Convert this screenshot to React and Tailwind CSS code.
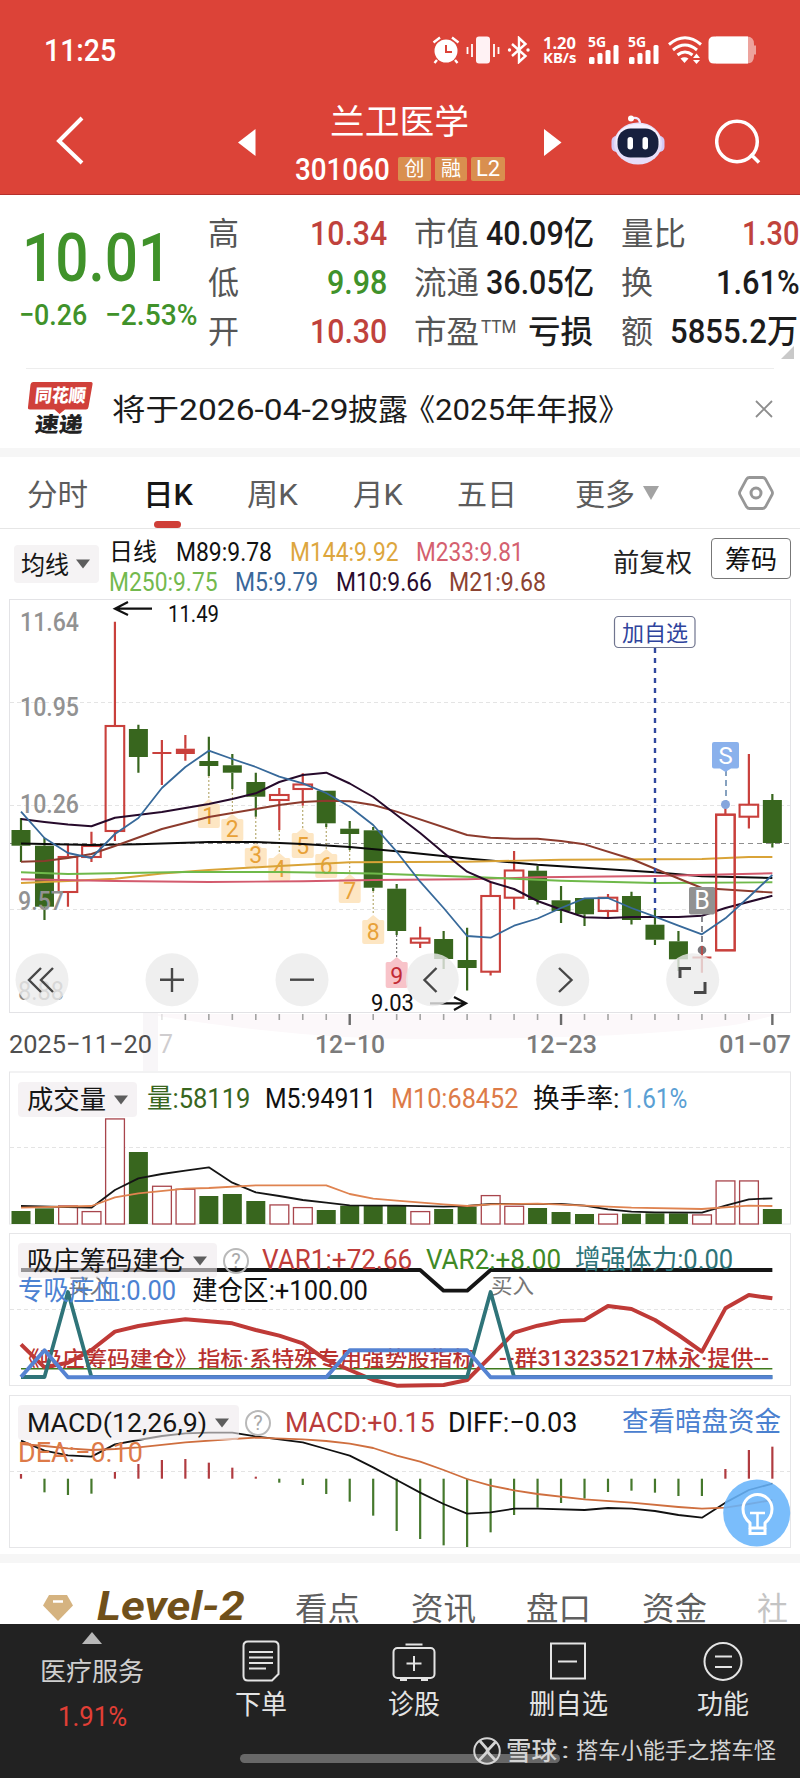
import { useLayoutEffect, useRef, useState } from "react";

const STEP = 23.48;
const cx = (i) => 21 + i * STEP;

/* Text stretched or condensed to the width of its box. */
function Fit({ className = "", children }) {
  const box = useRef(null);
  const inner = useRef(null);
  const [scale, setScale] = useState(1);
  useLayoutEffect(() => {
    const natural = inner.current.offsetWidth;
    if (natural) setScale(box.current.offsetWidth / natural);
  }, [children]);
  return (
    <span ref={box} className={"block shrink-0 overflow-visible whitespace-nowrap leading-none " + className}>
      <span ref={inner} className="inline-block origin-left" style={{ transform: `scaleX(${scale})` }}>
        {children}
      </span>
    </span>
  );
}

function Label({ x, y, w, size, fill, weight = 400, children, opacity }) {
  return (
    <text x={x} y={y} fontSize={size} fill={fill} fontWeight={weight} opacity={opacity} textLength={w} lengthAdjust="spacingAndGlyphs">
      {children}
    </text>
  );
}

function Curve({ pts, color, width = 1.6 }) {
  return (
    <polyline points={pts.map(([i, y]) => `${cx(i)},${y}`).join(" ")} fill="none" stroke={color} strokeWidth={width} strokeLinejoin="round" />
  );
}

const GREEN = "#38661e";
const RED = "#c9403c";

/* [high, body top, body bottom, low, kind] */
const candles = [
  [818, 830, 845.7, 862, "g"], [838, 845.7, 906.7, 920, "g"], [845, 857, 892, 906.7, "h"], [831.7, 846, 857, 862, "h"],
  [621.7, 726, 831, 841, "h"], [724.7, 729, 757, 772.7, "g"], [740, 752, 754, 785, "r"], [735, 748.7, 754, 760.7, "r"],
  [736.7, 761, 766, 776, "g"], [754, 765.3, 772.7, 789, "g"], [772.7, 782, 796.7, 816.7, "g"], [788, 795, 800, 830, "h"],
  [773.3, 784.5, 789, 805.7, "h"], [790.7, 790.7, 823.3, 827, "g"], [821, 828.7, 834, 850, "g"], [827, 830.3, 887.7, 891, "g"],
  [884, 888.7, 931, 935, "g"], [926.7, 938.5, 942.7, 948, "h"], [931, 939, 959, 969, "g"], [927.7, 960, 968, 990.5, "g"],
  [881.7, 896, 971.7, 975.5, "h"], [851, 870.5, 897.7, 909.5, "h"], [866, 870.7, 900, 904.5, "g"], [886, 900.3, 911, 923, "g"],
  [898, 898, 914.3, 926, "g"], [894, 897.7, 911, 918, "h"], [891.7, 896, 920, 924.5, "g"], [910, 924.7, 939.7, 945, "g"],
  [931, 941.3, 959.3, 971, "g"], [950, 956.5, 958.5, 972.7, "r"], [803, 814.7, 950.3, 950.3, "h"], [754, 804.7, 816.7, 828.5, "h"],
  [794, 800, 843, 847.5, "g"],
];

const ma5 = [811.7, 838, 853, 858, 834, 818, 788, 767, 750.7, 759, 767, 776.7, 783.3, 793, 806.7, 825, 851.7, 881.7, 908, 936, 937.7, 925.7, 918.5, 908, 898.3, 898, 908, 916.7, 925.7, 934.3, 918.3, 897, 875].map((y, i) => [i, y]);
const ma10 = [[0, 819], [1, 822], [2, 824.5], [3, 826.3], [4, 817.7], [6, 812], [8, 804], [9, 799], [10, 793.3], [11, 782], [12, 775], [13, 772.7], [14, 783.5], [15, 797], [16, 815], [17, 833], [18, 852.7], [19, 871.7], [20, 882], [21, 889], [22, 901], [23, 909.5], [24, 917.3], [25, 918], [26, 917], [28, 917], [29, 915.7], [30, 908], [32, 895.7]];
const ma21 = [[0, 861.7], [1, 861], [2, 858], [3, 854], [4, 846], [6, 829], [8, 817], [10, 809], [11, 805], [12, 802], [13, 800.7], [14, 801.3], [15, 805], [16, 811.7], [19, 835], [20, 837.7], [21, 838.7], [22, 838.7], [23, 841], [24, 844.3], [26, 859], [28, 878.5], [29, 888], [30, 889.5], [32, 892.5]];
const ma89 = [[0, 843.5], [3, 845], [5, 844.3], [8, 842], [10, 842], [12, 844], [14, 847], [16, 851.3], [19, 858.5], [22, 864.7], [27, 872.3], [29, 876.3], [32, 878]];
const ma144 = [[0, 883], [2, 881], [4, 878.7], [6, 873.5], [8, 870], [11, 866], [14, 862.3], [19, 861.7], [23, 859.7], [29, 859], [31, 857], [32, 857]];
const ma233 = [[0, 879.3], [4, 881], [8, 882], [12, 881.3], [15, 880], [19, 879.3], [22, 877.3], [27, 876], [32, 873.3]];
const ma250 = [[0, 872.3], [2, 874], [7, 872], [11, 872], [15, 873.5], [19, 876.7], [23, 880.7], [27, 883], [32, 882.3]];

/* [index, digit, peak y, box bottom y, from y] */
const tags = [
  [8, "1", 799, 828, 776], [9, "2", 814, 841, 789], [10, "3", 843, 867, 817], [11, "4", 853, 881, 830], [12, "5", 828, 858, 806],
  [13, "6", 849, 878, 827], [14, "7", 874, 903, 850], [15, "8", 915, 944, 891],
];

function Tag({ i, n, top, bottom, from, fill, color }) {
  const x = cx(i);
  return (
    <g>
      <path d={`M${x} ${from}V${top}`} stroke={color === "#c22a35" ? "#555" : "#a99a55"} strokeWidth="1" strokeDasharray="2 2" />
      <path d={`M${x - 9.5} ${top + 5}h3.5l6-5 6 5h3.5q1.500 0 1.500 1.500V${bottom - 2}q0 2-2 2h-18q-2 0-2-2V${top + 6.5}q0-1.500 1.500-1.500z`} fill={fill} opacity="0.85" />
      <text x={x} y={bottom - 4} fontSize="23" textAnchor="middle" fill={color}>{n}</text>
    </g>
  );
}

function PriceChart() {
  const controls = [42, 172, 302, 432.3, 562.7, 692.7];
  return (
    <svg viewBox="0 599 800 472" className="block h-[472px] w-[800px]" fontFamily="Roboto, 'Noto Sans CJK SC', sans-serif">
      <rect x="143" y="1013" width="15" height="58" fill="#f8f6f8" />
      <path d="M158 1014H780L740 1024Q640 1039 420 1039Q300 1039 158 1016z" fill="#fcf8fa" />
      <rect x="9.5" y="599.5" width="781" height="413" fill="none" stroke="#e3e3e6" />
      {[702.5, 805.5, 909.5].map((y) => <path key={y} d={`M10 ${y}H790`} stroke="#e4e4e4" strokeDasharray="4 3" />)}
      <path d="M10 843.5H790" stroke="#8f8f8f" strokeDasharray="5 4" strokeWidth="1.2" />
      <Label x="18" y="1000" w="46" size="26" fill="#8a8a8a">8.88</Label>
      {candles.map(([hi, top, bot, lo, kind], i) => {
        const x = cx(i);
        const c = kind === "g" ? GREEN : RED;
        return (
          <g key={i}>
            <path d={`M${x} ${hi}V${top}M${x} ${bot}V${lo}`} stroke={c} strokeWidth="2.2" />
            {kind === "h"
              ? <rect x={x - 9.3} y={top} width="18.6" height={bot - top} fill="none" stroke={c} strokeWidth="2.1" />
              : <rect x={x - 9.5} y={top} width="19" height={bot - top} fill={c} />}
          </g>
        );
      })}
      <Label x="20" y="631" w="59" size="26" fill="#929292" weight={500}>11.64</Label>
      <Label x="20" y="715.5" w="59" size="26" fill="#929292" weight={500}>10.95</Label>
      <Label x="20" y="813" w="59" size="26" fill="#929292" weight={500}>10.26</Label>
      <Label x="18" y="910" w="46" size="26" fill="#929292" weight={500}>9.57</Label>
      {tags.map(([i, n, top, bottom, from]) => <Tag key={i} i={i} n={n} top={top} bottom={bottom} from={from} fill="#fde2b8" color="#e8a138" />)}
      <Tag i={16} n="9" top={957} bottom={988} from={935} fill="#f7b9bf" color="#c22a35" />
      <Curve pts={ma89} color="#0b0b0b" width={2} />
      <Curve pts={ma144} color="#d9a337" width={1.9} />
      <Curve pts={ma233} color="#d35a6d" width={1.9} />
      <Curve pts={ma250} color="#6fb94a" width={1.9} />
      <Curve pts={ma21} color="#8c3b2d" width={1.9} />
      <Curve pts={ma10} color="#260a2b" width={2} />
      <path d="M655 648V910" stroke="#2f479e" strokeWidth="2.4" strokeDasharray="5 5" />
      <rect x="614.5" y="616.5" width="80.5" height="31" rx="4" fill="#fff" stroke="#70758f" strokeWidth="1.2" />
      <Label x="622" y="640.5" w="66" size="22" fill="#2f449c">加自选</Label>
      <path d="M726 770V803" stroke="#5f83ab" strokeWidth="1.5" strokeDasharray="6 4" />
      <circle cx="725.5" cy="804.5" r="4.5" fill="#86a6dd" />
      <path d="M714 742h23q2 0 2 2v22.500q0 2-2 2h-6l-5.500 3.500-5.500-3.500h-6q-2 0-2-2v-22.500q0-2 2-2z" fill="#8ab1ec" />
      <text x="725.500" y="763.5" fontSize="24" textAnchor="middle" fill="#fff">S</text>
      <rect x="689" y="887" width="26" height="27.500" rx="2" fill="#919191" />
      <text x="702" y="909" fontSize="25" textAnchor="middle" fill="#fff">B</text>
      <path d="M702 916V946" stroke="#6a6a72" strokeWidth="1.6" strokeDasharray="6 4" />
      <circle cx="702" cy="950" r="4.300" fill="#77777c" />
      <path d="M702 946V957" stroke={RED} strokeWidth="1.500" />
      <rect x={cx(30) - 9.3} y="814.7" width="18.6" height="135.6" fill="none" stroke={RED} strokeWidth="2.1" />
      <Curve pts={ma5} color="#37699a" width={1.8} />
      <path d="M152 608.7H115M128 602L115 608.7L128 615" fill="none" stroke="#111" strokeWidth="2.2" />
      <Label x="168" y="622" w="51" size="23" fill="#111">11.49</Label>
      <path d="M430 1003.3H466M454 997L466 1003.3L454 1010" fill="none" stroke="#111" strokeWidth="2.2" />
      <Label x="371" y="1011" w="43" size="23.5" fill="#111">9.03</Label>
      {controls.map((x) => <circle key={x} cx={x} cy="979.7" r="26.5" fill="#ebebeb" opacity="0.8" />)}
      <g fill="none" stroke="#474747" strokeWidth="2.4">
        <path d="M41 968L29 980L41 992M53 968L41 980L53 992" />
        <path d="M160 979.7H184M172 968V992" />
        <path d="M290 979.7H314" />
        <path d="M436.500 968L424.500 980L436.500 992" />
        <path d="M559 968L571.500 980L559 992" />
        <path d="M680 978V968.500H691M694 992.500H705V982" strokeWidth="3" />
      </g>
      {Array.from({ length: 27 }, (_, k) => k + 6).map((i) => {
        const major = i === 14 || i === 23 || i === 32;
        return <path key={i} d={`M${cx(i)} 1014V${major ? 1025 : 1020}`} stroke={major ? "#6c6c6c" : "#a3a3a3"} strokeWidth={major ? 2.4 : 1.6} opacity={i === 6 ? 0.3 : 1} />;
      })}
      <Label x="159" y="1053" w="14" size="26" fill="#cfcdcf">7</Label>
      <Label x="9" y="1053" w="143" size="26.500" fill="#4f4f4f">2025−11−20</Label>
      <Label x="315" y="1053" w="70" size="26.500" fill="#7b7b7b" weight={500}>12−10</Label>
      <Label x="526" y="1053" w="71" size="26.500" fill="#7b7b7b" weight={500}>12−23</Label>
      <Label x="719" y="1053" w="72" size="26.500" fill="#7b7b7b" weight={500}>01−07</Label>
    </svg>
  );
}

const vz = (pts) => pts.map(([i, z]) => [i, 1060 + z / 3]);
const mz = (pts) => pts.map(([i, z]) => [i, 1390 + z / 3]);

const volumes = [[453, 1], [445, 1], [436, 0], [453, 0], [175, 0], [276, 1], [377, 0], [386, 0], [408, 1], [402, 1], [423, 1], [433, 0], [441, 0], [450, 1], [437, 1], [435, 1], [438, 1], [453, 0], [447, 1], [440, 1], [405, 0], [437, 0], [444, 1], [456, 1], [462, 1], [461, 0], [461, 1], [460, 1], [460, 1], [463, 0], [361, 0], [361, 0], [447, 1]];
const vol5 = vz([[0, 438], [3, 443], [4, 390], [5, 355], [6, 342], [7, 332], [8, 322], [9, 368], [10, 397], [11, 408], [12, 420], [13, 428], [14, 436], [16, 437], [18, 440], [19, 438], [20, 432], [23, 432], [24, 437], [25, 448], [26, 455], [27, 457], [29, 458], [30, 437], [31, 418], [32, 415]]);
const vol10 = vz([[0, 443], [3, 438], [4, 412], [5, 400], [7, 386], [8, 384], [10, 376], [13, 376], [14, 402], [15, 416], [16, 422], [18, 433], [19, 438], [20, 433], [22, 431], [24, 437], [26, 443], [29, 447], [31, 437], [32, 438]]);

function VolumeChart() {
  return (
    <svg viewBox="0 1071 800 162" className="block h-[162px] w-[800px]">
      <rect x="9.5" y="1072" width="781" height="152" fill="none" stroke="#e6e6e8" />
      <path d="M10 1147.500H790" stroke="#e4e4e4" strokeDasharray="4 3" />
      {volumes.map(([z, solid], i) => {
        const y = 1060 + z / 3;
        return solid
          ? <rect key={i} x={cx(i) - 9.5} y={y} width="19" height={1224 - y} fill={GREEN} />
          : <rect key={i} x={cx(i) - 9.3} y={y + 0.6} width="18.8" height={1223.4 - y} fill="#fff" stroke="#a8454c" strokeWidth="1.3" />;
      })}
      <Curve pts={vol5} color="#151515" width={1.8} />
      <Curve pts={vol10} color="#df8350" width={1.8} />
    </svg>
  );
}

const redLine = vz([[0, 853], [1, 922], [2, 908], [3, 870], [4, 815], [5, 798], [6, 787], [7, 778], [8, 784], [9, 790], [10, 810], [11, 827], [12, 850], [13, 900], [14, 930], [15, 960], [16, 977], [18, 975], [19, 960], [20, 890], [21, 818], [22, 797], [23, 783], [24, 780], [25, 738], [26, 747], [27, 780], [28, 825], [29, 875], [30, 745], [31, 705], [32, 715]]);

function AccumulationChart() {
  return (
    <svg viewBox="0 1233 800 162" className="block h-[162px] w-[800px]" fontFamily="Roboto, 'Noto Sans CJK SC', sans-serif">
      <rect x="9.5" y="1233.5" width="781" height="152" fill="none" stroke="#e6e6e8" />
      <path d="M10 1309.5H790" stroke="#e4e4e4" strokeDasharray="4 3" />
      <Label x="68" y="1293" w="43" size="21" fill="#777">买入</Label>
      <Label x="491" y="1293" w="43" size="21" fill="#777">买入</Label>
      <Label x="17" y="1366" w="458" size="21" fill="#b8322f" weight={500}>《吸庄筹码建仓》指标·系特殊专用强势股指标</Label>
      <Label x="499" y="1366" w="270" size="21.500" fill="#b8322f" weight={500}>--群313235217林永·提供--</Label>
      <Curve pts={[[0, 1368.7], [32, 1368.7]]} color="#3f7a1d" width={1.5} />
      <Curve pts={[[0, 1270], [17, 1270], [18, 1290.7], [19, 1290.7], [20, 1270], [32, 1270]]} color="#151515" width={3.8} />
      <Curve pts={redLine} color="#bf3a37" width={4} />
      <Curve pts={[[0, 1377], [1, 1377], [2, 1292], [3, 1377], [19, 1377], [20, 1292], [21, 1377], [32, 1377]]} color="#2f7479" width={3.8} />
      <Curve pts={[[0, 1377], [1, 1350.3], [2, 1377.3], [13, 1377.3], [14, 1350.3], [19, 1350.3], [20, 1377.3], [32, 1377.3]]} color="#5583d2" width={4} />
    </svg>
  );
}

const macdBars = [252, 307, 315, 311, 246, 222, 210, 207, 218, 233, 260, 278, 285, 312, 335, 377, 423, 447, 466, 471, 427, 375, 353, 339, 326, 306, 302, 308, 318, 318, 237, 180, 170];
const diff = mz([[0, 152], [1, 182], [2, 196], [3, 200], [4, 163], [5, 150], [6, 138], [7, 130], [8, 128], [9, 128], [10, 139], [11, 148], [12, 157], [13, 177], [14, 197], [15, 232], [16, 270], [17, 308], [18, 342], [19, 371], [20, 367], [21, 356], [22, 356], [24, 360], [25, 354], [26, 356], [27, 363], [28, 375], [29, 383], [30, 338], [31, 300], [32, 281]]);
const dea = mz([[0, 162], [1, 168], [2, 175], [3, 180], [4, 177], [5, 172], [7, 157], [9, 147], [10, 143], [12, 148], [13, 153], [14, 161], [15, 174], [16, 197], [17, 215], [18, 240], [19, 267], [20, 287], [21, 301], [22, 312], [24, 328], [26, 338], [28, 351], [29, 356], [30, 353], [31, 342], [32, 330]]);

function MacdChart() {
  return (
    <svg viewBox="0 1395 800 159" className="block h-[159px] w-[800px]">
      <rect x="9.5" y="1395.5" width="781" height="152" fill="none" stroke="#e6e6e8" />
      <path d="M10 1471.500H790" stroke="#e4e4e4" strokeDasharray="4 3" />
      {macdBars.map((z, i) => {
        const y = 1390 + z / 3;
        return <path key={i} d={`M${cx(i)} 1478.700V${y}`} stroke={z < 266 ? "#b03b40" : "#45782c"} strokeWidth="2.2" />;
      })}
      <Curve pts={diff} color="#111" width={1.8} />
      <Curve pts={dea} color="#cf6f3f" width={1.8} />
      <circle cx="756.700" cy="1513" r="33.500" fill="#68b4fb" opacity="0.88" />
      <g fill="none" stroke="#fff" strokeWidth="3">
        <path d="M750 1528V1523Q743 1517 743 1509A14.500 14.500 0 0 1 772 1509Q772 1517 765 1523V1528Z" strokeLinejoin="round" />
        <path d="M750 1528V1533.500H765V1528" />
        <path d="M750 1513H765M757.500 1513V1527" strokeWidth="2.500" />
      </g>
    </svg>
  );
}

function Caret({ className = "" }) {
  return (
    <svg viewBox="0 0 14 10" className={"h-[10px] w-[14px] shrink-0 " + className}>
      <path d="M0 .5H14L7 9.500z" fill="currentColor" />
    </svg>
  );
}

function Picker({ className, width, children }) {
  return (
    <div className={"flex h-[35px] shrink-0 items-center rounded-[4px] bg-[#eeeaec]/60 pl-[9px] text-[26px] text-[#161616] " + className}>
      <Fit className={width}>{children}</Fit>
      <Caret className="ml-[8px] text-[#5d5d5d]" />
    </div>
  );
}

function Help({ className = "" }) {
  return (
    <span className={"flex size-[26px] shrink-0 items-center justify-center rounded-full border-2 border-[#b9b9b9] text-[20px] leading-none text-[#a9a9a9] " + className}>
      ?
    </span>
  );
}

function Signal() {
  return (
    <div className="relative h-[28px] w-[33px]">
      <Fit className="absolute left-[1px] -top-[1px] w-[18px] font-[Noto_Sans] text-[14px] font-bold">5G</Fit>
      <svg viewBox="0 0 33 28" className="h-[28px] w-[33px]" fill="#fff">
        <rect x="2" y="21" width="5.500" height="7" rx="1.500" />
        <rect x="10.500" y="17" width="5" height="11" rx="1.500" />
        <rect x="18.500" y="14" width="5" height="14" rx="1.500" />
        <rect x="26.500" y="9" width="5" height="19" rx="1.500" />
      </svg>
    </div>
  );
}

function StatusBar() {
  return (
    <div className="flex h-[100px] items-center">
      <Fit className="ml-[44px] w-[72px] text-[32px] font-medium">11:25</Fit>
      <div className="ml-[316px] flex items-center">
        <svg viewBox="0 0 28 28" className="h-[28px] w-[28px]">
          <circle cx="14" cy="15" r="11.500" fill="#fff" />
          <path d="M1.500 6.500L8 1.500M26.500 6.500L20 1.500M5 24L2.500 27M23 24L25.500 27" stroke="#fff" strokeWidth="2.400" fill="none" />
          <path d="M14 9V16H20" stroke="#dc4338" strokeWidth="2" fill="none" />
        </svg>
        <svg viewBox="0 0 34 28" className="ml-[6px] h-[28px] w-[34px]">
          <rect x="10" y="0.500" width="14" height="27" rx="3" fill="#fff2f4" />
          <path d="M1.500 11V18M6 8V21M28 8V21M32.500 11V18" stroke="#fff" strokeWidth="1.800" />
        </svg>
        <svg viewBox="0 0 24 28" className="ml-[7px] h-[28px] w-[24px]">
          <path d="M5 8L18.500 20L12 26V2L18.500 8L5 20" fill="none" stroke="#fff" strokeWidth="2.400" />
          <circle cx="2.500" cy="14" r="1.700" fill="#fff" />
          <circle cx="21" cy="14" r="1.700" fill="#fff" />
        </svg>
        <div className="ml-[12px] flex flex-col font-[Noto_Sans] font-bold">
          <Fit className="w-[33px] text-[16.5px]">1.20</Fit>
          <Fit className="w-[33px] text-[14px]">KB/s</Fit>
        </div>
        <div className="ml-[11px]"><Signal /></div>
        <div className="ml-[7px]"><Signal /></div>
        <svg viewBox="0 0 34 28" className="ml-[8px] h-[28px] w-[34px]" fill="none" stroke="#fff" strokeWidth="3">
          <path d="M1 8.500Q17 -5 33 8.500M5 14Q17 4 29 14M9.500 19Q17 13 24.500 19" />
          <path d="M12.500 22.500Q16.500 20 20.500 22.500L16.500 27z" fill="#fff" stroke="none" />
          <path d="M25 22L28.500 17.500L32 22zM25 24L28.500 28L32 24z" fill="#fff" stroke="none" />
        </svg>
        <svg viewBox="0 0 49 28" className="ml-[6px] h-[28px] w-[49px]">
          <path d="M8 0.500H39Q46 .5 46 8V9.500H48V18.500H46V20Q46 27.500 39 27.500H8Z" fill="#eda39d" />
          <path d="M6 0.500H40V27.500H6Q.5 27.500 .5 22V6Q.5 .5 6 .5z" fill="#fff" />
        </svg>
      </div>
    </div>
  );
}

function TitleBar() {
  return (
    <div className="flex h-[94px] items-start">
      <svg viewBox="0 0 30 50" className="ml-[55px] mt-[15px] h-[50px] w-[30px]">
        <path d="M27 3L4 26L27 48" fill="none" stroke="#fff" strokeWidth="4" />
      </svg>
      <svg viewBox="0 0 18 27" className="ml-[153px] mt-[29px] h-[27px] w-[18px]"><path d="M0 13.500L17.500 0V27z" fill="#fff" /></svg>
      <div className="ml-[39px] flex w-[212px] flex-col">
        <Fit className="ml-[35px] mt-[5px] h-[36px] w-[139px] text-[34px]">兰卫医学</Fit>
        <div className="mt-[14px] flex h-[28px] items-center">
          <Fit className="w-[95px] text-[31px] font-medium">301060</Fit>
          <span className="ml-[8px] flex h-[24px] w-[33px] items-center justify-center rounded-[2px] bg-[#d98f4f] text-[20px] leading-none">创</span>
          <span className="ml-[4px] flex h-[24px] w-[32px] items-center justify-center rounded-[2px] bg-[#d98f4f] text-[20px] leading-none">融</span>
          <span className="ml-[4px] flex h-[24px] w-[34px] items-center justify-center rounded-[2px] bg-[#d98f4f] text-[22px] leading-none">L2</span>
        </div>
      </div>
      <svg viewBox="0 0 18 27" className="ml-[37px] mt-[29px] h-[27px] w-[18px]"><path d="M17.500 13.500L0 0V27z" fill="#fff" /></svg>
      <svg viewBox="0 0 54 50" className="ml-[49px] mt-[15px] h-[50px] w-[54px]">
        <path d="M20 3.500Q29 1 29 9" fill="none" stroke="#efe9ff" strokeWidth="2.200" />
        <circle cx="20" cy="3.500" r="3" fill="#fff" />
        <rect x="0.500" y="21" width="10" height="16" rx="5" fill="#d4caf5" />
        <rect x="43.500" y="21" width="10" height="16" rx="5" fill="#d4caf5" />
        <ellipse cx="27" cy="28.500" rx="24" ry="21" fill="#e6def9" />
        <ellipse cx="27" cy="26" rx="22" ry="17" fill="#f7f3ff" />
        <rect x="6.500" y="13.500" width="41" height="29" rx="13" fill="#17203e" />
        <rect x="16.500" y="22" width="5.500" height="12.500" rx="2.700" fill="#fff" />
        <rect x="31.500" y="22" width="5.500" height="12.500" rx="2.700" fill="#fff" />
      </svg>
      <svg viewBox="0 0 46 46" className="ml-[50px] mt-[19px] h-[46px] w-[46px]">
        <circle cx="22" cy="22.500" r="20.300" fill="none" stroke="#fff" strokeWidth="3.500" />
        <path d="M35.500 35L44 43.500" stroke="#fff" strokeWidth="3.500" />
      </svg>
    </div>
  );
}

function Quote() {
  const row = "flex h-[49px] items-center";
  return (
    <section className="flex h-[173px] pt-[14px]">
      <div className="w-[208px] shrink-0 text-[#40922a]">
        <Fit className="ml-[22px] mt-[17px] w-[149px] text-[66px] font-medium">10.01</Fit>
        <div className="mt-[8px] flex font-medium">
          <Fit className="ml-[19px] w-[68px] text-[30px]">−0.26</Fit>
          <Fit className="ml-[18px] w-[92px] text-[30px]">−2.53%</Fit>
        </div>
      </div>
      <div className="w-[206px] shrink-0 text-[32px] text-[#555]">
        <div className={row}><Fit className="w-[31px]">高</Fit><Fit className="ml-[71px] w-[77px] text-[33px] font-medium text-[#c0423c]">10.34</Fit></div>
        <div className={row}><Fit className="w-[31px]">低</Fit><Fit className="ml-[88px] w-[60px] text-[33px] font-medium text-[#40922a]">9.98</Fit></div>
        <div className={row}><Fit className="w-[31px]">开</Fit><Fit className="ml-[71px] w-[77px] text-[33px] font-medium text-[#c0423c]">10.30</Fit></div>
      </div>
      <div className="w-[207px] shrink-0 text-[32px] text-[#555]">
        <div className={row}><Fit className="w-[65px]">市值</Fit><Fit className="ml-[7px] w-[108px] text-[33px] font-medium text-[#1c1c1c]">40.09亿</Fit></div>
        <div className={row}><Fit className="w-[65px]">流通</Fit><Fit className="ml-[7px] w-[108px] text-[33px] font-medium text-[#1c1c1c]">36.05亿</Fit></div>
        <div className={row}>
          <Fit className="w-[65px]">市盈</Fit>
          <Fit className="ml-[2px] w-[35px] -translate-y-[5px] text-[18px]">TTM</Fit>
          <Fit className="ml-[12px] w-[65px] font-medium text-[#1c1c1c]">亏损</Fit>
        </div>
      </div>
      <div className="relative w-[179px] shrink-0 text-[32px] text-[#555]">
        <div className={row}><Fit className="w-[65px]">量比</Fit><Fit className="ml-[56px] w-[57px] text-[33px] font-medium text-[#c0423c]">1.30</Fit></div>
        <div className={row}><Fit className="w-[32px]">换</Fit><Fit className="ml-[63px] w-[84px] text-[33px] font-medium text-[#1c1c1c]">1.61%</Fit></div>
        <div className={row}><Fit className="w-[32px]">额</Fit><Fit className="ml-[17px] w-[128px] text-[33px] font-medium text-[#1c1c1c]">5855.2万</Fit></div>
        <svg viewBox="0 0 13 13" className="absolute left-[160px] top-[137px] size-[13px]"><path d="M13 0V13H0z" fill="#c9c9c9" /></svg>
      </div>
    </section>
  );
}

function Notice() {
  return (
    <section className="mx-[26px] flex h-[80px] items-start border-t border-[#ededed]">
      <div className="relative ml-[1px] mt-[13px] h-[56px] w-[68px] shrink-0 font-black">
        <svg viewBox="0 0 68 56" className="absolute inset-0 h-[56px] w-[68px]">
          <path d="M6 0H64Q66 0 65.500 2.500L61.500 25Q61 27.500 59 27.500H38L32.500 32L27.500 27.500H3Q.5 27.500 1 25L3.500 2.500Q4 0 6 0z" fill="#d0403a" />
        </svg>
        <Fit className="absolute left-[8px] top-[5px] w-[51px] -skew-x-6 text-[18px] font-black text-white">同花顺</Fit>
        <Fit className="absolute left-[8px] top-[33px] w-[48px] -skew-x-6 text-[21px] font-black text-[#222]">速递</Fit>
      </div>
      <Fit className="ml-[17px] mt-[26px] w-[236px] text-[30px] text-[#1b1b1b]">将于2026-04-29</Fit>
      <Fit className="mt-[26px] w-[60px] text-[30px] text-[#1b1b1b]">披露</Fit>
      <Fit className="-ml-[4px] mt-[26px] w-[225px] text-[30px] text-[#1b1b1b]">《2025年年报》</Fit>
      <svg viewBox="0 0 18 18" className="ml-[126px] mt-[31px] size-[18px] shrink-0"><path d="M1 1L17 17M17 1L1 17" stroke="#8d8d8d" strokeWidth="1.800" /></svg>
    </section>
  );
}

function Periods() {
  return (
    <section className="relative flex h-[72px] items-center border-b border-[#e6e6e6] text-[30px] text-[#5c5c5c]">
      <Fit className="ml-[27px] mt-[4px] w-[61px]">分时</Fit>
      <Fit className="ml-[55px] mt-[4px] w-[50px] font-medium text-[#161616]">日K</Fit>
      <Fit className="ml-[54px] mt-[4px] w-[51px]">周K</Fit>
      <Fit className="ml-[55px] mt-[4px] w-[50px]">月K</Fit>
      <Fit className="ml-[54px] mt-[4px] w-[60px]">五日</Fit>
      <Fit className="ml-[58px] mt-[4px] w-[60px]">更多</Fit>
      <svg viewBox="0 0 16 14" className="ml-[8px] h-[14px] w-[16px]"><path d="M0 0H16L8 14z" fill="#a3a3a3" /></svg>
      <svg viewBox="0 0 36 34" className="ml-[79px] h-[34px] w-[36px]" fill="none" stroke="#979797" strokeWidth="2.800">
        <path d="M11.500 1.500H24.500Q26.500 1.500 27.500 3.200L34 15.200Q35 17 34 18.800L27.500 30.800Q26.500 32.500 24.500 32.500H11.500Q9.500 32.500 8.500 30.800L2 18.800Q1 17 2 15.200L8.500 3.200Q9.500 1.500 11.500 1.500z" />
        <circle cx="18" cy="17" r="5" strokeWidth="3" />
      </svg>
      <span className="absolute bottom-0 left-[154px] h-[7px] w-[27px] rounded-full bg-[#cf3f38]" />
    </section>
  );
}

function AverageLegend() {
  return (
    <section className="flex h-[70px] text-[26px]">
      <div className="ml-[14px] mt-[16px] flex h-[38px] w-[85px] shrink-0 items-center rounded-[4px] bg-[#f5f3f4] pl-[7px] text-[25px] text-[#161616]">
        <Fit className="mt-[2px] w-[48px]">均线</Fit>
        <Caret className="ml-[7px] text-[#5d5d5d]" />
      </div>
      <div className="ml-[10px] mt-[7px] w-[500px] shrink-0">
        <div className="flex h-[31px] items-center">
          <Fit className="w-[48px] text-[24px] text-[#111]">日线</Fit>
          <Fit className="ml-[19px] w-[96px] text-[#111]">M89:9.78</Fit>
          <Fit className="ml-[18px] w-[109px] text-[#dda63d]">M144:9.92</Fit>
          <Fit className="ml-[17px] w-[108px] text-[#d4606f]">M233:9.81</Fit>
        </div>
        <div className="flex h-[30px] items-center">
          <Fit className="w-[109px] text-[#73b94e]">M250:9.75</Fit>
          <Fit className="ml-[17px] w-[83px] text-[#3a689a]">M5:9.79</Fit>
          <Fit className="ml-[18px] w-[96px] text-[#2a0c2d]">M10:9.66</Fit>
          <Fit className="ml-[17px] w-[97px] text-[#8c4332]">M21:9.68</Fit>
        </div>
      </div>
      <Fit className="ml-[4px] mt-[21px] w-[79px] text-[26px] text-[#222]">前复权</Fit>
      <div className="ml-[19px] mt-[9px] flex h-[41px] w-[80px] items-center rounded-[4px] border border-[#777] pl-[13px] text-[26px] text-[#111]">
        <Fit className="mt-[2px] w-[52px]">筹码</Fit>
      </div>
    </section>
  );
}

function VolumePanel() {
  return (
    <section className="relative">
      <VolumeChart />
      <div className="absolute left-[18px] top-[11px] flex items-center text-[27px]">
        <Picker className="w-[119px]" width="w-[79px]">成交量</Picker>
        <Fit className="ml-[10px] w-[103px] text-[#38661e]">量:58119</Fit>
        <Fit className="ml-[15px] w-[111px] text-[#111]">M5:94911</Fit>
        <Fit className="ml-[15px] w-[127px] text-[#dd7b48]">M10:68452</Fit>
        <Fit className="ml-[15px] w-[87px] text-[#111]">换手率:</Fit>
        <Fit className="ml-[2px] w-[65px] text-[#5a9fd4]">1.61%</Fit>
      </div>
    </section>
  );
}

function AccumulationPanel() {
  return (
    <section className="relative">
      <AccumulationChart />
      <div className="absolute left-[18px] top-[10px] flex items-center text-[27px]">
        <Picker className="w-[199px]" width="w-[158px]">吸庄筹码建仓</Picker>
        <Help className="ml-[6px]" />
        <Fit className="ml-[13px] w-[150px] text-[#bf3d3a]">VAR1:+72.66</Fit>
        <Fit className="ml-[14px] w-[135px] text-[#3f8a26]">VAR2:+8.00</Fit>
        <Fit className="ml-[14px] w-[158px] text-[#2f7479]">增强体力:0.00</Fit>
      </div>
      <div className="absolute left-[18px] top-[45px] flex text-[27px]">
        <Fit className="w-[158px] text-[#4c82d2]">专吸庄血:0.00</Fit>
        <Fit className="ml-[16px] w-[176px] text-[#111]">建仓区:+100.00</Fit>
      </div>
    </section>
  );
}

function MacdPanel() {
  return (
    <section className="relative">
      <MacdChart />
      <div className="absolute left-[18px] top-[10px] flex items-center text-[28px]">
        <Picker className="w-[221px]" width="w-[180px]">MACD(12,26,9)</Picker>
        <Help className="ml-[6px]" />
        <Fit className="ml-[14px] w-[150px] text-[#b93c3b]">MACD:+0.15</Fit>
        <Fit className="ml-[13px] w-[129px] text-[#111]">DIFF:−0.03</Fit>
        <Fit className="ml-[45px] w-[159px] text-[27px] text-[#4a80cf]">查看暗盘资金</Fit>
      </div>
      <Fit className="absolute left-[18px] top-[44px] w-[125px] text-[28px] text-[#dd7a48]">DEA:−0.10</Fit>
    </section>
  );
}

function InfoTabs() {
  return (
    <section className="flex h-[61px] items-start overflow-hidden pt-[29px] text-[32px] text-[#5f5f5f]">
      <svg viewBox="0 0 30 26" className="ml-[43px] mt-[3px] h-[26px] w-[30px]">
        <path d="M6 0H24L30 10.500L15 26L0 10.500z" fill="#d5b380" />
        <path d="M10 6.500H20" stroke="#fff" strokeWidth="2.500" />
      </svg>
      <Fit className="-mt-[5px] ml-[24px] w-[148px] text-[40px] font-bold italic text-[#70501a]">Level-2</Fit>
      <Fit className="ml-[50px] mt-[1px] w-[65px]">看点</Fit>
      <Fit className="ml-[51px] mt-[1px] w-[65px]">资讯</Fit>
      <Fit className="ml-[50px] mt-[1px] w-[65px]">盘口</Fit>
      <Fit className="ml-[51px] mt-[1px] w-[65px]">资金</Fit>
      <Fit className="ml-[50px] mt-[1px] w-[31px] text-[#c4c4c4]">社</Fit>
    </section>
  );
}

function BottomBar() {
  return (
    <footer className="relative flex h-[154px] bg-[#222] text-[27px] text-[#e4e4e4]">
      <div className="flex w-[184px] shrink-0 flex-col items-center">
        <svg viewBox="0 0 20 12" className="mt-[8px] h-[12px] w-[20px]"><path d="M10 0L20 12H0z" fill="#b8b8b8" /></svg>
        <Fit className="mt-[15px] w-[104px] text-[26px] text-[#cfcfcf]">医疗服务</Fit>
        <Fit className="mt-[18px] w-[69px] text-[28px] text-[#e23f36]">1.91%</Fit>
      </div>
      <div className="flex w-[153px] shrink-0 flex-col items-center">
        <svg viewBox="0 0 38 42" className="mt-[16px] h-[42px] w-[38px]" fill="none" stroke="#e4e4e4" strokeWidth="2">
          <path d="M6 1.500H32Q36.500 1.500 36.500 6V34L30 40.500H6Q1.500 40.500 1.500 36V6Q1.500 1.500 6 1.500z" />
          <path d="M7 12H31M7 17.500H31M7 23H31M7 28.500H24" />
        </svg>
        <Fit className="mt-[10px] w-[52px]">下单</Fit>
      </div>
      <div className="flex w-[154px] shrink-0 flex-col items-center">
        <svg viewBox="0 0 44 42" className="mt-[16px] h-[42px] w-[44px]" fill="none" stroke="#e4e4e4" strokeWidth="2">
          <rect x="1.500" y="8" width="41" height="30" rx="4" />
          <path d="M13.500 4.500H30.500M22 16V31M14.500 23.500H29.500M8 40H15M29 40H36" />
        </svg>
        <Fit className="mt-[10px] w-[52px]">诊股</Fit>
      </div>
      <div className="flex w-[154px] shrink-0 flex-col items-center">
        <svg viewBox="0 0 38 42" className="mt-[16px] h-[42px] w-[38px]" fill="none" stroke="#e4e4e4" strokeWidth="2">
          <rect x="2" y="3.500" width="34" height="35" />
          <path d="M9 21.500H28" />
        </svg>
        <Fit className="mt-[10px] w-[79px]">删自选</Fit>
      </div>
      <div className="flex w-[155px] shrink-0 flex-col items-center">
        <svg viewBox="0 0 40 42" className="mt-[16px] h-[42px] w-[40px]" fill="none" stroke="#e4e4e4" strokeWidth="2">
          <circle cx="20" cy="21.500" r="18.500" />
          <path d="M12 16.500H29M12 27H29" />
        </svg>
        <Fit className="mt-[10px] w-[52px]">功能</Fit>
      </div>
      <span className="absolute left-[240px] top-[130px] h-[9px] w-[320px] rounded-full bg-[#686868]" />
      <div className="absolute left-[472px] top-[112px] flex items-center text-[22px] text-[#d4d4d4]">
        <svg viewBox="0 0 30 30" className="size-[30px]" fill="none" stroke="#d4d4d4">
          <circle cx="15" cy="15" r="12.800" strokeWidth="2" />
          <path d="M8 5L14.500 12.500Q16.500 15 14 17L6.500 25M23.500 6L16.500 13.500Q15 15.500 17 17.500L23.500 24.500" strokeWidth="2.800" />
        </svg>
        <Fit className="ml-[4px] w-[51px] text-[25px] font-medium">雪球</Fit>
        <Fit className="ml-[4px] w-[8px]">:</Fit>
        <Fit className="ml-[7px] w-[200px]">搭车小能手之搭车怪</Fit>
      </div>
    </footer>
  );
}

export default function App() {
  return (
    <main className="h-[1778px] w-[800px] overflow-hidden bg-white font-[Roboto,'Noto_Sans_CJK_SC',sans-serif]">
      <header className="h-[195px] border-b border-[#b5302c] bg-[#dc4338] text-white">
        <StatusBar />
        <TitleBar />
      </header>
      <Quote />
      <Notice />
      <div className="h-[9px] bg-[#f6f6f6]" />
      <Periods />
      <AverageLegend />
      <PriceChart />
      <VolumePanel />
      <AccumulationPanel />
      <MacdPanel />
      <div className="h-[9px] bg-[#f6f6f6]" />
      <InfoTabs />
      <BottomBar />
    </main>
  );
}
